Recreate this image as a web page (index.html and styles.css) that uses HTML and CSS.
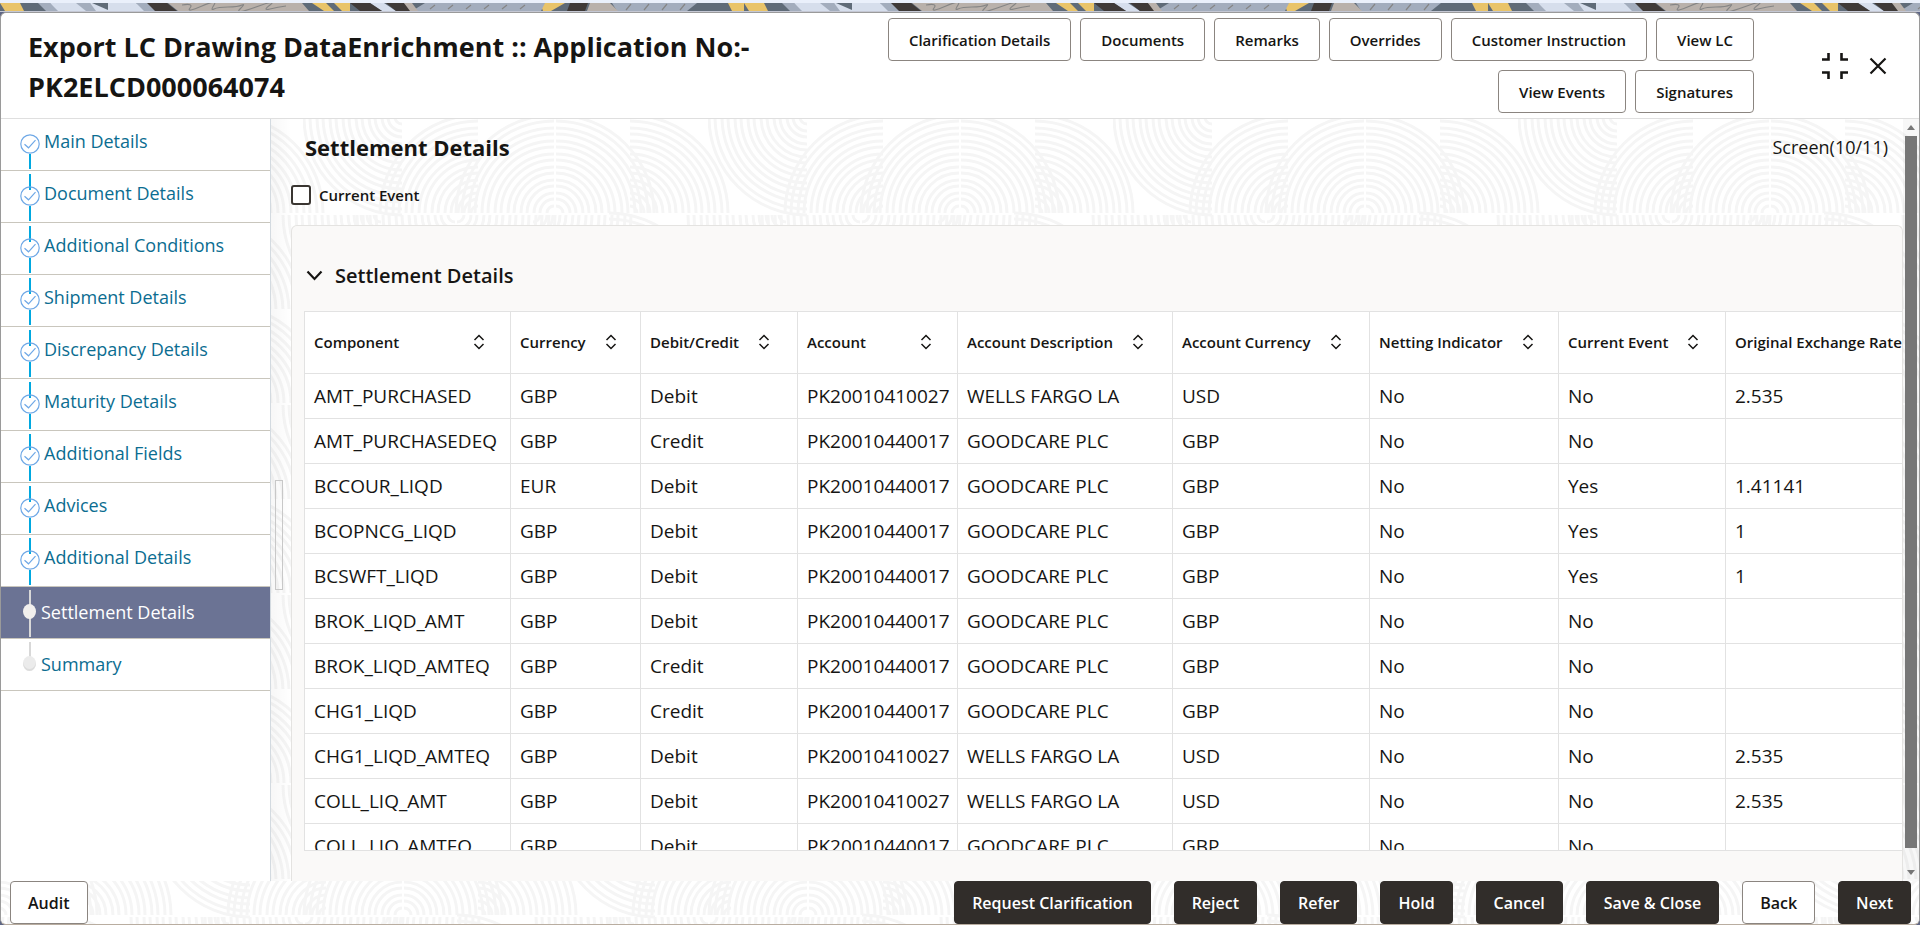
FILE: index.html
```html
<!DOCTYPE html>
<html lang="en">
<head>
    <meta charset="UTF-8">
    <meta name="viewport" content="width=device-width, initial-scale=1.0">
    <title>Export LC Drawing DataEnrichment</title>
    <link rel="stylesheet" href="styles.css">
</head>
<body>
    <!-- shared icons -->
    <svg class="sprite" aria-hidden="true">
        <symbol id="sort" viewBox="0 0 12 16">
            <path d="M1.500 6l4.500-4.500 4.500 4.500M1.500 10l4.500 4.500 4.500-4.500" fill="none" stroke="#161513" stroke-width="1.500"/>
        </symbol>
        <symbol id="done" viewBox="0 0 20 20">
            <circle cx="10" cy="10" r="9.200" fill="none" stroke="#6fa8e6" stroke-width="1.200"/>
            <path d="M4.500 10.200l4 3.600 7-7.600" fill="none" stroke="#6fa8e6" stroke-width="1.200"/>
        </symbol>
    </svg>

    <div class="banner"></div>

    <div class="dialog">
        <header class="header">
            <h1>Export LC Drawing DataEnrichment :: Application No:- PK2ELCD000064074</h1>
            <div class="actions">
                <button class="btn">Clarification Details</button>
                <button class="btn">Documents</button>
                <button class="btn">Remarks</button>
                <button class="btn">Overrides</button>
                <button class="btn">Customer Instruction</button>
                <button class="btn">View LC</button>
                <button class="btn">View Events</button>
                <button class="btn">Signatures</button>
            </div>
            <div class="window-icons">
                <button class="icon-btn" aria-label="Collapse">
                    <svg width="26" height="26" viewBox="0 0 26 26"><path d="M0 6.500h6.500V0M19.500 0v6.500H26M0 19.500h6.500V26M19.500 26v-6.500H26" fill="none" stroke="#161513" stroke-width="2.600"/></svg>
                </button>
                <button class="icon-btn" aria-label="Close">
                    <svg width="18" height="18" viewBox="0 0 18 18"><path d="M1.500 1.500l15 15M16.500 1.500l-15 15" fill="none" stroke="#161513" stroke-width="2.200"/></svg>
                </button>
            </div>
        </header>

        <div class="body">
            <nav class="steps">
                <a class="step done" href="#"><svg><use href="#done"/></svg>Main Details</a>
                <a class="step done" href="#"><svg><use href="#done"/></svg>Document Details</a>
                <a class="step done" href="#"><svg><use href="#done"/></svg>Additional Conditions</a>
                <a class="step done" href="#"><svg><use href="#done"/></svg>Shipment Details</a>
                <a class="step done" href="#"><svg><use href="#done"/></svg>Discrepancy Details</a>
                <a class="step done" href="#"><svg><use href="#done"/></svg>Maturity Details</a>
                <a class="step done" href="#"><svg><use href="#done"/></svg>Additional Fields</a>
                <a class="step done" href="#"><svg><use href="#done"/></svg>Advices</a>
                <a class="step done" href="#"><svg><use href="#done"/></svg>Additional Details</a>
                <a class="step current" href="#"><i class="dot"></i>Settlement Details</a>
                <a class="step" href="#"><i class="dot"></i>Summary</a>
            </nav>

            <div class="splitter"><div class="splitter-handle"></div></div>

            <main class="content">
                <div class="content-header">
                    <h2>Settlement Details</h2>
                    <span class="screen-no">Screen(10/11)</span>
                </div>
                <label class="check"><input type="checkbox"> Current Event</label>

                <section class="card">
                    <h3>
                        <svg width="17" height="11" viewBox="0 0 17 11"><path d="M1.500 1.500l7 7.500 7-7.500" fill="none" stroke="#161513" stroke-width="2.200"/></svg>
                        Settlement Details
                    </h3>
                    <div class="table-wrap">
                        <table>
                            <colgroup>
                                <col class="w-component"><col class="w-currency"><col class="w-dc"><col class="w-account"><col class="w-desc"><col class="w-acy"><col class="w-netting"><col class="w-event"><col class="w-rate">
                            </colgroup>
                            <thead>
                                <tr>
                                    <th class="spread"><div>Component <svg><use href="#sort"/></svg></div></th>
                                    <th><div>Currency <svg><use href="#sort"/></svg></div></th>
                                    <th><div>Debit/Credit <svg><use href="#sort"/></svg></div></th>
                                    <th class="spread"><div>Account <svg><use href="#sort"/></svg></div></th>
                                    <th><div>Account Description <svg><use href="#sort"/></svg></div></th>
                                    <th><div>Account Currency <svg><use href="#sort"/></svg></div></th>
                                    <th><div>Netting Indicator <svg><use href="#sort"/></svg></div></th>
                                    <th><div>Current Event <svg><use href="#sort"/></svg></div></th>
                                    <th><div>Original Exchange Rate</div></th>
                                </tr>
                            </thead>
                            <tbody>
                                <tr><td>AMT_PURCHASED</td><td>GBP</td><td>Debit</td><td>PK20010410027</td><td>WELLS FARGO LA</td><td>USD</td><td>No</td><td>No</td><td>2.535</td></tr>
                                <tr><td>AMT_PURCHASEDEQ</td><td>GBP</td><td>Credit</td><td>PK20010440017</td><td>GOODCARE PLC</td><td>GBP</td><td>No</td><td>No</td><td></td></tr>
                                <tr><td>BCCOUR_LIQD</td><td>EUR</td><td>Debit</td><td>PK20010440017</td><td>GOODCARE PLC</td><td>GBP</td><td>No</td><td>Yes</td><td>1.41141</td></tr>
                                <tr><td>BCOPNCG_LIQD</td><td>GBP</td><td>Debit</td><td>PK20010440017</td><td>GOODCARE PLC</td><td>GBP</td><td>No</td><td>Yes</td><td>1</td></tr>
                                <tr><td>BCSWFT_LIQD</td><td>GBP</td><td>Debit</td><td>PK20010440017</td><td>GOODCARE PLC</td><td>GBP</td><td>No</td><td>Yes</td><td>1</td></tr>
                                <tr><td>BROK_LIQD_AMT</td><td>GBP</td><td>Debit</td><td>PK20010440017</td><td>GOODCARE PLC</td><td>GBP</td><td>No</td><td>No</td><td></td></tr>
                                <tr><td>BROK_LIQD_AMTEQ</td><td>GBP</td><td>Credit</td><td>PK20010440017</td><td>GOODCARE PLC</td><td>GBP</td><td>No</td><td>No</td><td></td></tr>
                                <tr><td>CHG1_LIQD</td><td>GBP</td><td>Credit</td><td>PK20010440017</td><td>GOODCARE PLC</td><td>GBP</td><td>No</td><td>No</td><td></td></tr>
                                <tr><td>CHG1_LIQD_AMTEQ</td><td>GBP</td><td>Debit</td><td>PK20010410027</td><td>WELLS FARGO LA</td><td>USD</td><td>No</td><td>No</td><td>2.535</td></tr>
                                <tr><td>COLL_LIQ_AMT</td><td>GBP</td><td>Debit</td><td>PK20010410027</td><td>WELLS FARGO LA</td><td>USD</td><td>No</td><td>No</td><td>2.535</td></tr>
                                <tr><td>COLL_LIQ_AMTEQ</td><td>GBP</td><td>Debit</td><td>PK20010440017</td><td>GOODCARE PLC</td><td>GBP</td><td>No</td><td>No</td><td></td></tr>
                            </tbody>
                        </table>
                    </div>
                </section>
            </main>

            <div class="scrollbar" aria-hidden="true">
                <svg width="8" height="5" viewBox="0 0 8 5"><path d="M0 5l4-5 4 5z" fill="#777"/></svg>
                <div class="thumb"></div>
                <svg width="8" height="5" viewBox="0 0 8 5"><path d="M0 0l4 5 4-5z" fill="#777"/></svg>
            </div>
        </div>

        <footer class="footer">
            <button class="btn audit">Audit</button>
            <button class="btn dark">Request Clarification</button>
            <button class="btn dark">Reject</button>
            <button class="btn dark">Refer</button>
            <button class="btn dark">Hold</button>
            <button class="btn dark">Cancel</button>
            <button class="btn dark">Save &amp; Close</button>
            <button class="btn">Back</button>
            <button class="btn dark">Next</button>
        </footer>
    </div>
</body>
</html>
```
FILE: styles.css
```css
* {
    box-sizing: border-box;
}

:root {
    --waves: url("data:image/svg+xml,%3Csvg xmlns='http://www.w3.org/2000/svg' width='405' height='190' viewBox='0 0 405 190'%3E%3Cdefs%3E%3Cg id='q' fill='none' stroke='%23f5f5f5' stroke-width='3'%3E%3Cpath d='M0-7A7 7 0 0 1 7 0M0-14A14 14 0 0 1 14 0M0-20A20 20 0 0 1 20 0M0-27A27 27 0 0 1 27 0M0-33A33 33 0 0 1 33 0M0-40A40 40 0 0 1 40 0M0-46A46 46 0 0 1 46 0M0-53A53 53 0 0 1 53 0M0-59A59 59 0 0 1 59 0M0-66A66 66 0 0 1 66 0M0-72A72 72 0 0 1 72 0M0-79A79 79 0 0 1 79 0M0-85A85 85 0 0 1 85 0M0-92A92 92 0 0 1 92 0M0-98A98 98 0 0 1 98 0'/%3E%3C/g%3E%3Cg id='r'%3E%3Cuse href='%23q' x='253' y='94'/%3E%3Cuse href='%23q' transform='translate(251 94) scale(-1 1)'/%3E%3Cuse href='%23q' x='327' y='94'/%3E%3Cuse href='%23q' x='-78' y='94'/%3E%3Cuse href='%23q' transform='translate(175 94) scale(-1 1)'/%3E%3Cuse href='%23q' transform='translate(99 -2) scale(-1 -1)'/%3E%3C/g%3E%3C/defs%3E%3Cuse href='%23r'/%3E%3Cuse href='%23r' transform='translate(405 190) scale(-1 -1)'/%3E%3C/svg%3E");
    --mosaic: url("data:image/svg+xml,%3Csvg xmlns='http://www.w3.org/2000/svg' width='744' height='8' viewBox='0 0 744 8'%3E%3Crect width='744' height='8' fill='%235f6b78'/%3E%3Cpath d='M0 0h20l4 8H5zM312 0h14l8 8h-10zM334 0h16v8h-8zM540 0h25l-14 8h-8zM728 0h16v8h-12z' fill='%23e9c46a'/%3E%3Cpath d='M38 0h12l10 8H46zM75 0h15l10 8H85zM136 0h15l8 8h-18zM425 0h120l-4 8H412zM612 0h85l-10 8h-70z' fill='%23a3adbd'/%3E%3Cpath d='M50 0h26l10 8H58zM90 0h46l8 8h-48zM370 0h14l12 8h-14z' fill='%23d6deec'/%3E%3Cpath d='M92 0h16v7z' fill='%235f6b78'/%3E%3Cpath d='M147 0h20l10 8h-22zM350 0h20l12 8h-22zM386 0h18l8 8h-16zM570 0h18l-3 8h-18z' fill='%233f3a38'/%3E%3Cpath d='M168 0h134l7 8H178zM404 0h8l6 8h-8zM590 0h20l8 8h-31z' fill='%23b9b1ab'/%3E%3Cpath d='M182 2q12-2 8 3t12-2 12-1 0 4 14-2 14-2-2 4 16-2 14-2 0 4 16-3M430 6l5-4M448 6l5-4M466 6l5-4M484 6l5-4M502 6l5-4M520 6l5-4M626 7l5-6M644 7l5-6M662 7l5-6M680 7l5-6' fill='none' stroke='%23858585' stroke-width='1.2'/%3E%3C/svg%3E");
}

body {
    margin: 0;
    height: 100vh;
    display: flex;
    flex-direction: column;
    font-family: "Open Sans", "Noto Sans", sans-serif;
    color: #161513;
    background-color: #5e6684;
}

h1, h2, h3 {
    margin: 0;
}

.sprite {
    display: none;
}

.banner {
    height: 12px;
    flex: none;
    border-top: 3px solid #eaf0fb;
    border-bottom: 1px solid #c5c8d4;
    background: var(--mosaic) repeat-x;
}

.dialog {
    flex: 1;
    min-height: 0;
    display: flex;
    flex-direction: column;
    border: 1px solid #9a9a9a;
    border-bottom-color: #b9ada0;
    border-radius: 6px;
    background-color: white;
    overflow: hidden;
}

.header {
    display: flex;
    min-height: 106px;
    flex: none;
    border-bottom: 1px solid #dfdfdf;
}

.header h1 {
    flex: 1;
    padding: 14px 0 0 27px;
    font-size: 27px;
    font-weight: 700;
    line-height: 40px;
}

.actions {
    width: 900px;
    padding-top: 5px;
    display: flex;
    flex-wrap: wrap;
    align-content: flex-start;
    justify-content: flex-end;
    gap: 9px;
}

.btn {
    height: 43px;
    padding: 0 20px;
    border: 1px solid #8b8580;
    border-radius: 4px;
    background-color: white;
    color: #161513;
    font-family: inherit;
    font-size: 15px;
    font-weight: 600;
    white-space: nowrap;
    cursor: pointer;
}

.window-icons {
    width: 165px;
    padding-right: 32px;
    display: flex;
    align-items: center;
    justify-content: flex-end;
    gap: 21px;
}

.icon-btn {
    padding: 0;
    border: 0;
    background: none;
    line-height: 0;
    cursor: pointer;
}

.body {
    flex: 1;
    min-height: 0;
    display: flex;
    background: var(--waves) 302px 0;
}

/* left step list */
.steps {
    width: 270px;
    flex: none;
    border-right: 1px solid #d3dae0;
    background-color: white;
}

.step {
    position: relative;
    display: flex;
    align-items: center;
    gap: 5px;
    height: 52px;
    padding: 0 0 2px 22px;
    border-bottom: 1px solid #c9c6bd;
    color: #0b6d91;
    font-size: 18px;
    text-decoration: none;
}

.step.done {
    gap: 4px;
    padding: 0 0 8px 19px;
}

.step svg {
    width: 20px;
    height: 20px;
    margin-top: 6px;
    z-index: 1;
}

/* connector between the step markers */
.step::before,
.step::after {
    content: "";
    position: absolute;
    left: 28px;
    width: 2px;
    background-color: #00a8e0;
}

.step::before {
    top: 3px;
    height: 16px;
}

.step::after {
    top: 35px;
    bottom: 1px;
}

.step:first-child::before,
.step:last-child::after {
    display: none;
}

.step.current {
    background-color: #6b7394;
    color: white;
}

.step.current::before,
.step.current::after,
.step:last-child::before {
    background-color: #d8d8d8;
}

.step.current::after {
    top: 30px;
}

.dot {
    width: 13px;
    height: 15px;
    border-radius: 50%;
    background-color: #ebebeb;
    box-shadow: inset 0 -2px #dcdcdc;
    z-index: 1;
}

.current .dot {
    box-shadow: none;
    background-color: #f1efed;
}

.splitter {
    width: 20px;
    flex: none;
    display: flex;
    align-items: center;
    padding: 70px 0 0 4px;
    background: linear-gradient(to right, rgba(0, 0, 0, 0.03), transparent);
}

.splitter-handle {
    width: 8px;
    height: 110px;
    border: 1px solid #c8c8c8;
}

.content {
    flex: 1;
    min-width: 0;
    display: flex;
    flex-direction: column;
}

.content-header {
    display: flex;
    justify-content: space-between;
    padding: 13px 15px 0 14px;
    line-height: 30px;
}

.content-header h2 {
    font-size: 22px;
    font-weight: 700;
}

.screen-no {
    font-size: 18px;
}

.check {
    display: flex;
    align-items: center;
    gap: 8px;
    height: 30px;
    margin: 18px 0 15px;
    font-size: 15px;
    font-weight: 600;
}

.check input {
    appearance: none;
    width: 20px;
    height: 20px;
    margin: 0;
    border: 2px solid #3a3632;
    border-radius: 3px;
    background-color: white;
}

.card {
    flex: 1;
    min-height: 0;
    display: flex;
    flex-direction: column;
    padding: 31px 0 30px 12px;
    border: 1px solid #e4e3e1;
    border-bottom: 0;
    border-radius: 6px 6px 0 0;
    background-color: #faf9f8;
}

.card h3 {
    display: flex;
    align-items: center;
    gap: 12px;
    height: 36px;
    padding-left: 2px;
    margin-bottom: 18px;
    font-size: 20px;
    font-weight: 600;
}

.table-wrap {
    flex: 1;
    min-height: 0;
    overflow: hidden;
    border: 1px solid #e2e2e2;
    border-right: 0;
    background-color: white;
}

table {
    width: 100%;
    min-width: 1650px;
    table-layout: fixed;
    border-collapse: separate;
    border-spacing: 0;
}

.w-component { width: 206px; }
.w-currency { width: 130px; }
.w-dc { width: 157px; }
.w-account { width: 160px; }
.w-desc { width: 215px; }
.w-acy { width: 197px; }
.w-netting { width: 189px; }
.w-event { width: 167px; }

th,
td {
    padding: 0 9px;
    border-right: 1px solid #e2e2e2;
    border-bottom: 1px solid #e2e2e2;
    text-align: left;
    white-space: nowrap;
}

th {
    height: 62px;
    padding-bottom: 2px;
    font-size: 15px;
    font-weight: 600;
}

th div {
    display: flex;
    align-items: center;
    gap: 19px;
}

th.spread div {
    justify-content: space-between;
    padding-right: 16px;
}

th svg {
    width: 12px;
    height: 16px;
    flex: none;
}

td {
    height: 45px;
    font-size: 19px;
}

.scrollbar {
    width: 16px;
    flex: none;
    display: flex;
    flex-direction: column;
    align-items: center;
    gap: 6px;
    padding: 6px 0;
    background-color: rgba(0, 0, 0, 0.03);
}

.thumb {
    flex: 1;
    width: 12px;
    margin-bottom: 16px;
    background-color: #777777;
}

.footer {
    display: flex;
    flex: none;
    gap: 23px;
    padding: 0 8px 0 9px;
    background: var(--waves) 150px -60px;
}

.footer .btn {
    padding: 0 17px;
    font-size: 16px;
}

.footer .audit {
    margin-right: auto;
}

.footer .dark {
    border-color: #312d2a;
    background-color: #312d2a;
    color: white;
}
```
